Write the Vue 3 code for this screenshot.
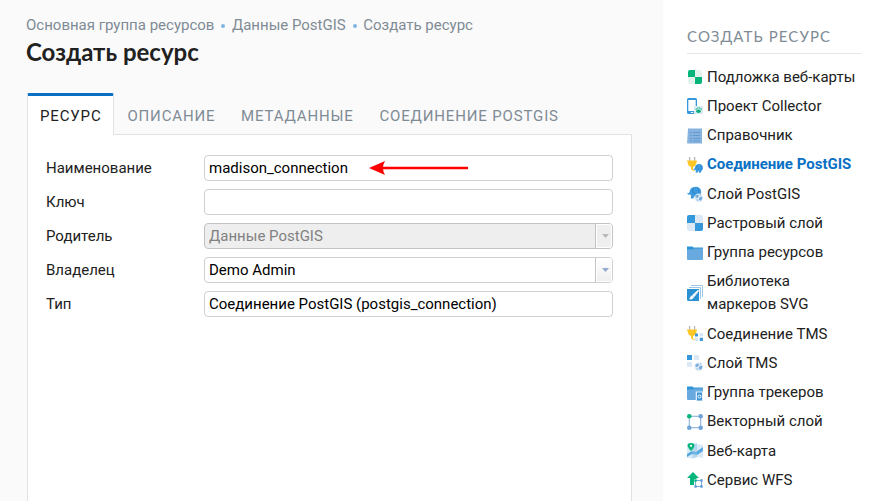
<script setup>
const crumbs = ['Основная группа ресурсов', 'Данные PostGIS', 'Создать ресурс']
const tabs = ['Ресурс', 'Описание', 'Метаданные', 'Соединение PostGIS']
const fields = [
  { label: 'Наименование', value: 'madison_connection', arrow: true },
  { label: 'Ключ', value: '' },
  { label: 'Родитель', value: 'Данные PostGIS', select: true, disabled: true },
  { label: 'Владелец', value: 'Demo Admin', select: true },
  { label: 'Тип', value: 'Соединение PostGIS (postgis_connection)' },
]
const elephant =
  '<path d="M2.600 6C3 2.500 5.500 1 8.500.8c3.500-.2 5.700 2.200 5.700 5.200 0 1.500-.6 3-1.700 3.700L11 12.500H8.600L8 10.500H7L6.500 12.500H4L3.800 8.500C3.200 9 1.200 8.900.2 7.500L.9 6.800c.8.5 1.400.3 1.700-.8z" fill="#3d9adf"/><path d="M6.300 2C5 4.500 5.800 7.300 8.300 7.500M10.500 3c1.600 1 1.800 3 .3 4.500" fill="none" stroke="#2478b8" stroke-width=".7"/>'
const globe =
  '<circle cx="11.700" cy="11.700" r="4.300" fill="#dcebf8"/><path d="M8.500 9.500l2.500-1 1 1.500-1.500 2-2-.6zM12 12l2-1.600 1.500 1.100-.8 2.500-1.500.7-1.400-1zM12.500 8l1.800.8-.8.8zM9 13.300l1.800.4-.3 1.300z" fill="#78acdb"/>'
const plug =
  '<path d="M2.600 0v4M7.600 0v4" stroke="#b5b5b5" stroke-width="1.300"/><path d="M0 3.500h10v1.300H9.300v2Q8.700 9.500 6 10v2.500H4V10Q1.300 9 .8 6.800v-2H0z" fill="#fcc624"/><path d="M5 11.500Q5 14 7.500 13.500" fill="none" stroke="#fcc624"/>'
const items = [
  { label: 'Подложка веб-карты', icon: '<rect x="1" y="1" width="14" height="14" rx="2" fill="#e3f3ec"/><path d="M3 1h5v7H1V3q0-2 2-2zM8 8h7v5q0 2-2 2H8z" fill="#04b57b"/>' },
  { label: 'Проект Collector', icon: '<path fill-rule="evenodd" d="M1.500 0h7Q10 0 10 1.500V8H8.700V2H1.300v11H7v3H1.500Q0 16 0 14.500v-13Q0 0 1.500 0zM3.800 14v1h2.400v-1z" fill="#3598db"/><rect x="7" y="8" width="9" height="8" fill="#d9ebf3"/><ellipse cx="11.500" cy="13.300" rx="2.300" ry="1.700" fill="#08ab79"/><path d="M9.200 10.500v1.300M10.800 9.400v1.400M12.700 9.400v1.400M14.200 10.500v1.300" stroke="#08ab79" stroke-width="1.100"/>' },
  { label: 'Справочник', icon: '<path d="M1 .8l1-.8 1 1 1-1 1 1 1-1 1 1 1-1 1 1 1-1 1 1 1-1 1 1 1-1 1 .8v14.400l-1 .8-1-1-1 1-1-1-1 1-1-1-1 1-1-1-1 1-1-1-1 1-1-1-1 1-1-1-1 .8z" fill="#88b3df"/><path d="M3 4.500h2m1 0h7M3 7.500h2m1 0h7M3 10.500h2m1 0h7M3 13h2m1 0h7" stroke="#6299d0"/>' },
  { label: 'Соединение PostGIS', active: true, icon: plug + '<g transform="translate(6 6.500) scale(.7 .73)">' + elephant + '</g>' },
  { label: 'Слой PostGIS', icon: elephant + globe },
  { label: 'Растровый слой', icon: '<path d="M0 2Q0 0 2 0h12q2 0 2 2v12q0 2-2 2H2q-2 0-2-2z" fill="#dce8f3"/><path d="M2 0h6v8H0V2q0-2 2-2zM8 8h8v6q0 2-2 2H8z" fill="#3598db"/>' },
  { label: 'Группа ресурсов', icon: '<path d="M0 1.500h5.500l1 1H16V5H0z" fill="#2f94d6"/><path d="M0 4.500h6l1-1h9V14q0 1-1 1H1q-1 0-1-1z" fill="#68a9df"/>' },
  { label: 'Библиотека маркеров SVG', wide: true, icon: '<path d="M4 .5h11.500V12M2 2.500h11.500V14" fill="none" stroke="#9fc7e9"/><path d="M0 4h12v12H1.500Q0 16 0 14.500z" fill="#2b91d3"/><path d="M11 5l.8.8-4.700 6-1.700-1.500zM5 10.800l1.800 1.500q-1.500 2.500-4.300 1.800 1-.8 1-2 .5-1.200 1.500-1.300z" fill="#fff" stroke="#fff" stroke-width=".6"/>' },
  { label: 'Соединение TMS', icon: plug + '<path d="M12.700 7h3.300v3.500h-3.300zM8 11.800h3V15H8z" fill="#d6e6f5"/><path d="M8 7.500h3v3H8zM12.700 11.800h3.300V15h-3.300z" fill="#4597d6"/>' },
  { label: 'Слой TMS', icon: '<path d="M0 0h5v5H0z" fill="#3598db"/><path d="M7 0h5v5H7zM0 7h5v5H0z" fill="#dce8f3"/>' + globe },
  { label: 'Группа трекеров', icon: '<path d="M0 1.500h5.500l1 1H16V5H0z" fill="#2f94d6"/><path d="M0 4.500h6l1-1h9V15H1q-1 0-1-1z" fill="#68a9df"/><rect x="8.700" y="6.500" width="7.300" height="9.500" fill="#e0effa"/><rect x="10" y="7.500" width="5" height="8" fill="#3d95d7"/><circle cx="12.500" cy="11.500" r="1.500" fill="none" stroke="#fff"/>' },
  { label: 'Векторный слой', icon: '<rect x="2.300" y="2.300" width="11.400" height="11.400" fill="none" stroke="#8cb4de" stroke-width="1.100"/><g fill="#70a3d9"><circle cx="13.700" cy="2.300" r="2.300"/><circle cx="2.300" cy="13.700" r="2.300"/><circle cx="13.700" cy="13.700" r="2.300"/></g><circle cx="2.300" cy="2.300" r="2.300" fill="#04b57b"/>' },
  { label: 'Веб-карта', icon: '<path d="M0 1l5 1 5-1 6 1v13l-5-1-5 1.500L0 15z" fill="#d8eaf7"/><path d="M0 11l5-3 4 1 7-5v4l-6 4-5-1-5 3z" fill="#55a8df"/><path d="M5.500 1v14.500L10 14V0z" fill="#8fc3e8" opacity=".5"/><path d="M4 0c5 0 4 4 0 8-4-4-5-8 0-8z" fill="#04b57b"/><circle cx="4" cy="2.800" r="1.100" fill="#fff"/>' },
  { label: 'Сервис WFS', icon: '<path d="M6 0l6 6H9.500v7H3V6H0z" fill="#04b57b"/><rect x="7" y="7" width="9" height="9" fill="#fff"/><path d="M8.500 8.500h6v6h-6z" fill="none" stroke="#78a9dc"/><path d="M7.300 7.300h2.400v2.400H7.300z" fill="#04b57b"/><path d="M13.300 7.300h2.400v2.400h-2.400zM7.300 13.300h2.400v2.400H7.300zM13.300 13.300h2.400v2.400h-2.400z" fill="#659dd6"/>' },
]
</script>

<template>
  <div class="page">
    <main class="content">
      <nav class="crumbs">
        <template v-for="(crumb, i) in crumbs" :key="crumb">
          <i v-if="i" class="dot"></i>
          <span>{{ crumb }}</span>
        </template>
      </nav>
      <h1>Создать ресурс</h1>
      <div class="tabs">
        <div v-for="(tab, i) in tabs" :key="tab" class="tab" :class="{ active: i === 0 }">{{ tab }}</div>
      </div>
      <section class="panel">
        <div v-for="field in fields" :key="field.label" class="row">
          <label>{{ field.label }}</label>
          <div class="input" :class="{ disabled: field.disabled }">
            <span class="value">{{ field.value }}</span>
            <svg v-if="field.arrow" class="arrow" viewBox="0 0 100 14" width="100" height="14">
              <path d="M14 7H99" stroke="#f00" stroke-width="2.600" />
              <path d="M0 7L16 0Q12 7 16 14Z" fill="#f00" />
            </svg>
            <span v-if="field.select" class="drop">
              <svg width="7" height="4" viewBox="0 0 7 4"><path d="M0 0h7L3.500 4z" fill="currentColor" /></svg>
            </span>
          </div>
        </div>
      </section>
    </main>
    <aside class="sidebar">
      <h2>Создать ресурс</h2>
      <ul>
        <li v-for="item in items" :key="item.label" :class="{ active: item.active }">
          <svg class="icon" width="16" height="16" viewBox="0 0 16 16" v-html="item.icon"></svg>
          <span :class="{ wrap: item.wide }">{{ item.label }}</span>
        </li>
      </ul>
    </aside>
  </div>
</template>

<style>
body {
  overflow: hidden;
}
</style>

<style scoped>
.page {
  display: flex;
  height: 501px;
  overflow: hidden;
  background: #fff;
  color: #212121;
  font: 15px/23px Roboto, 'Liberation Sans', sans-serif;
  white-space: nowrap;
}
.content {
  box-sizing: border-box;
  width: 663px;
  padding: 14px 31px 0 26px;
  display: flex;
  flex-direction: column;
  background: #fafafa;
}
.crumbs {
  display: flex;
  align-items: center;
  height: 23px;
  color: #7f8b95;
}
.dot {
  width: 4px;
  height: 4px;
  margin: 0 6.500px 0 7px;
  border-radius: 50%;
  background: #80b5e0;
}
h1 {
  margin: 0;
  height: 32px;
  font: 700 24px/30px Lato, sans-serif;
}
.tabs {
  position: relative;
  display: flex;
  margin: 24px 0 -1px 1px;
  height: 42px;
}
.tab {
  padding: 0 12.300px 0 13.400px;
  color: #7f8b95;
  font-size: 15px;
  line-height: 46px;
  letter-spacing: 0.85px;
  text-transform: uppercase;
}
.tab.active {
  box-sizing: border-box;
  width: 87px;
  padding: 0 0 0 12px;
  border: 1px solid #e2e2e2;
  border-top: 3px solid #0970c4;
  border-bottom: 0;
  border-radius: 2px 2px 0 0;
  background: #fff;
  color: #212121;
  line-height: 40px;
}
.panel {
  flex: 1;
  margin-left: 1px;
  padding: 20px 18px 0;
  border: 1px solid #e2e2e2;
  border-bottom: 0;
  background: #fff;
}
.row {
  display: flex;
  height: 26px;
  margin-bottom: 8px;
  line-height: 26px;
}
label {
  width: 158px;
}
.input {
  box-sizing: border-box;
  flex: 1;
  display: flex;
  align-items: center;
  padding-left: 4px;
  border: 1px solid #d0d0d0;
  border-radius: 4px;
  color: #000;
  line-height: 24px;
  overflow: hidden;
}
.disabled {
  background: #eee;
  border-color: #c3c3c3;
  color: #818181;
}
.arrow {
  margin-left: 21px;
}
.drop {
  box-sizing: border-box;
  display: flex;
  align-items: center;
  justify-content: center;
  width: 17px;
  height: 24px;
  margin-left: auto;
  padding-left: 2px;
  border-left: 1px solid #c3c3c3;
  box-shadow: inset 0 0 0 1px #fff;
  background: linear-gradient(#fff, #eee);
  color: #91a9d1;
}
.disabled .drop {
  background: #efefef;
  color: #b8b8b8;
}
.sidebar {
  padding: 21px 10px 0 24px;
  width: 174px;
}
h2 {
  margin: 0;
  height: 32px;
  border-bottom: 1px solid #e5e5e5;
  color: #7f8b95;
  font: 400 15px/30px Lato, sans-serif;
  letter-spacing: 1.1px;
  text-transform: uppercase;
}
ul {
  margin: 8.400px 0 0;
  padding: 0;
  list-style: none;
}
li {
  display: flex;
  align-items: center;
  gap: 4px;
  padding: 3.140px 0;
}
li.active {
  color: #0970c4;
  font-weight: 700;
}
.icon {
  flex: none;
}
.wrap {
  width: 120px;
  white-space: normal;
}
</style>
